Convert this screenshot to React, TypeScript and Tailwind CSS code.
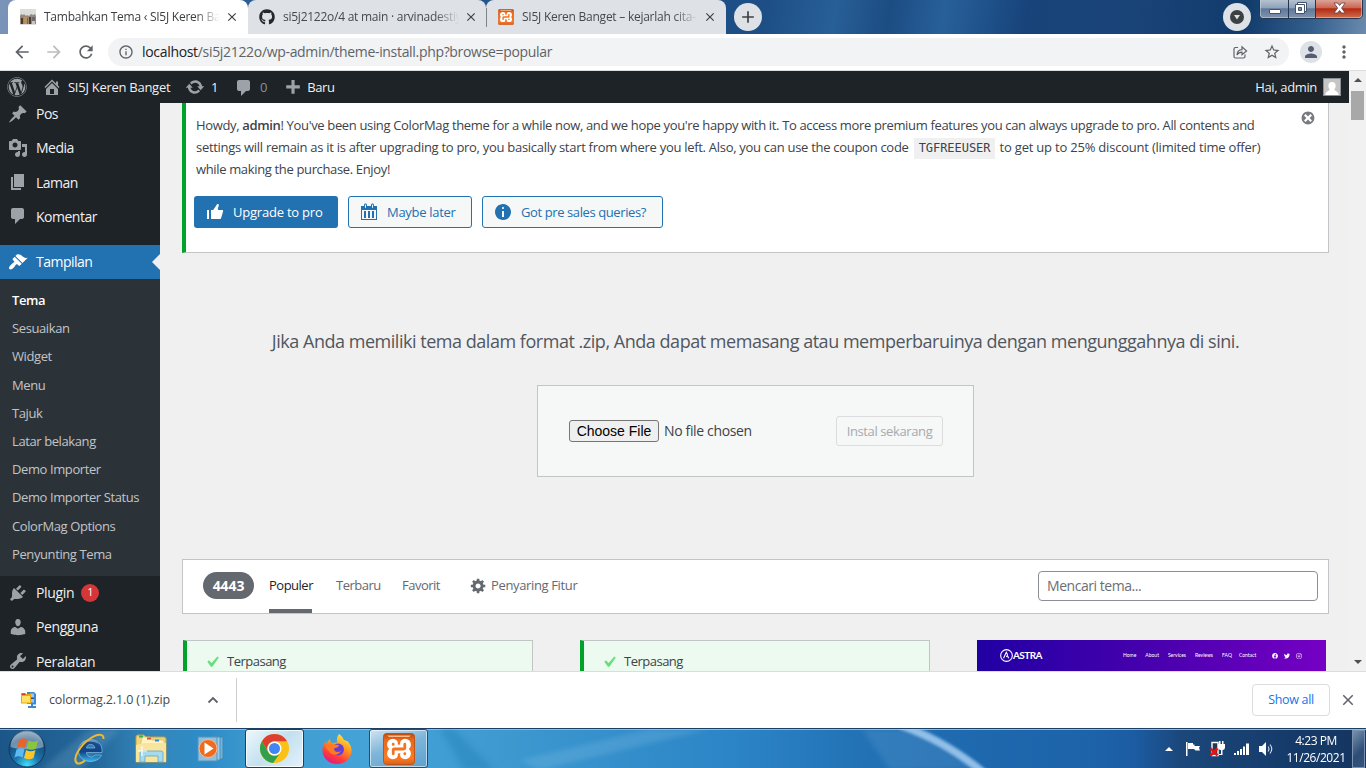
import type { ReactNode } from "react";
import { FaGithub, FaWordpress, FaFacebook, FaTwitter, FaInstagram } from "react-icons/fa";
import { MdArrowBack, MdArrowForward, MdRefresh, MdStarBorder, MdPerson, MdMoreVert, MdInfoOutline, MdClose, MdAdd } from "react-icons/md";

const dashicons = {
  post: "M10.44 3.02l1.82-1.82 6.36 6.35-1.83 1.82c-1.05-.68-2.48-.57-3.41.36l-.75.75c-.92.93-1.04 2.35-.35 3.41l-1.83 1.82-2.41-2.41-2.8 2.79c-.42.42-3.38 2.71-3.8 2.29s1.86-3.39 2.28-3.81l2.79-2.79L4.1 9.36l1.83-1.82c1.05.69 2.48.57 3.4-.36l.75-.75c.93-.92 1.05-2.35.36-3.41z",
  media: "M13 11V4c0-.55-.45-1-1-1h-1.67L9 1H5L3.67 3H2c-.55 0-1 .45-1 1v7c0 .55.45 1 1 1h10c.55 0 1-.45 1-1zM7 4.5c1.38 0 2.5 1.12 2.5 2.5S8.38 9.5 7 9.5 4.5 8.38 4.5 7 5.62 4.5 7 4.5zM14 6h5v10.5c0 1.38-1.12 2.5-2.5 2.5S14 17.88 14 16.5s1.12-2.5 2.5-2.5c.17 0 .34.02.5.05V9h-3V6zm-4 8.05V13h2v3.5c0 1.38-1.12 2.5-2.5 2.5S7 17.88 7 16.5 8.12 14 9.5 14c.17 0 .34.02.5.05z",
  page: "M6 15V2h10v13H6zm-1 1h8v2H3V5h2v11z",
  comments: "M5 2h9c1.1 0 2 .9 2 2v7c0 1.1-.9 2-2 2h-2l-5 5v-5H5c-1.1 0-2-.9-2-2V4c0-1.1.9-2 2-2z",
  appearance: "M14.48 11.06L7.41 3.99l1.5-1.5c.5-.56 2.3-.47 3.51.32 1.21.8 1.43 1.28 2.91 2.1 1.18.64 2.45 1.26 4.45.85zm-.71.71L6.7 4.7 4.93 6.47c-.39.39-.39 1.02 0 1.41l1.06 1.06c.39.39.39 1.03 0 1.42-.6.6-1.43 1.11-2.21 1.69-.35.26-.7.53-1.01.84C1.43 14.23.4 16.08 1.4 17.07c.99 1 2.84-.03 4.18-1.36.31-.31.58-.66.85-1.02.57-.78 1.08-1.61 1.69-2.21.39-.39 1.02-.39 1.41 0l1.06 1.06c.39.39 1.02.39 1.41 0z",
  plugins: "M13.11 4.36L9.87 7.6 8 5.73l3.24-3.24c.35-.34 1.05-.2 1.56.32.52.51.66 1.21.31 1.55zm-8 1.77l.91-1.12 9.01 9.01-1.19.84c-.71.71-2.63 1.16-3.82 1.16H6.14L4.9 17.26c-.59.59-1.54.59-2.12 0-.59-.58-.59-1.53 0-2.12l1.24-1.24v-3.88c0-1.13.4-3.19 1.09-3.89zm7.26 3.97l3.24-3.24c.34-.35 1.04-.21 1.55.31.52.51.66 1.21.31 1.55l-3.24 3.25z",
  users: "M10 9.25c-2.27 0-2.73-3.44-2.73-3.44C7 4.02 7.82 2 9.97 2c2.16 0 2.98 2.02 2.71 3.81 0 0-.41 3.44-2.68 3.44zm0 2.57L12.72 10c2.39 0 4.52 2.33 4.52 4.53v2.49s-3.65 1.13-7.24 1.13c-3.65 0-7.24-1.13-7.24-1.13v-2.49c0-2.25 1.94-4.48 4.47-4.48z",
  tools: "M16.68 9.77c-1.34 1.34-3.3 1.67-4.95.99l-5.41 6.52c-.99.99-2.59.99-3.58 0s-.99-2.59 0-3.57l6.52-5.42c-.68-1.65-.35-3.61.99-4.95 1.28-1.28 3.12-1.62 4.72-1.06l-2.89 2.89 2.82 2.82 2.86-2.87c.53 1.58.18 3.39-1.08 4.65zM3.81 16.21c.4.39 1.04.39 1.43 0 .4-.4.4-1.04 0-1.43-.39-.4-1.03-.4-1.43 0-.39.39-.39 1.03 0 1.43z",
  home: "M16 8.5l1.53 1.53-1.06 1.06L10 4.6l-6.47 6.49-1.06-1.06L10 2.5l4 4v-2h2v4zm-6-2.46l6 5.99V18H4v-5.97zM12 17v-5H8v5h4z",
  update: "M10.2 3.28c3.53 0 6.43 2.61 6.92 6h2.08l-3.5 4-3.5-4h2.32c-.45-1.97-2.21-3.45-4.32-3.45-1.45 0-2.73.71-3.54 1.78L4.95 5.66C6.23 4.2 8.11 3.28 10.2 3.28zm-.4 13.44c-3.52 0-6.43-2.61-6.92-6H.8l3.5-4c1.17 1.33 2.33 2.67 3.5 4H5.48c.45 1.97 2.21 3.45 4.32 3.45 1.45 0 2.73-.71 3.54-1.78l1.71 1.95c-1.28 1.46-3.15 2.38-5.25 2.38z",
  plus: "M17 7v3h-5v5H9v-5H4V7h5V2h3v5h5z",
  dismiss: "M10 2c4.42 0 8 3.58 8 8s-3.58 8-8 8-8-3.58-8-8 3.58-8 8-8zm5 11l-3-3 3-3-2-2-3 3-3-3-2 2 3 3-3 3 2 2 3-3 3 3z",
  thumbsUp: "M12.72 2c.15-.02.26.02.41.07.56.19.83.79.66 1.35-.17.55-1 3.04-1 3.58 0 .53.75 1 1.35 1h3c.6 0 1 .4 1 1s-2 7-2 7c-.17.39-.55 1-1 1H6V8h2.14c.41-.41 3.3-4.71 3.58-5.27.21-.41.6-.68 1-.73zM2 8h2v9H2V8z",
  calendar: "M15 4h3v14H2V4h3V3c0-.83.67-1.5 1.5-1.5S8 2.17 8 3v1h4V3c0-.83.67-1.5 1.5-1.5S15 2.17 15 3v1zM6 3v2.5c0 .28.22.5.5.5s.5-.22.5-.5V3c0-.28-.22-.5-.5-.5S6 2.72 6 3zm7 0v2.5c0 .28.22.5.5.5s.5-.22.5-.5V3c0-.28-.22-.5-.5-.5s-.5.22-.5.5zm4 14V8H3v9h14zM7 16V9H5v7h2zm4 0V9H9v7h2zm4 0V9h-2v7h2z",
  info: "M10 2c4.42 0 8 3.58 8 8s-3.58 8-8 8-8-3.58-8-8 3.58-8 8-8zm1 4c0-.55-.45-1-1-1s-1 .45-1 1 .45 1 1 1 1-.45 1-1zm0 9V9H9v6h2z",
  generic: "M18 12h-2.18c-.17.7-.44 1.35-.81 1.93l1.54 1.54-2.1 2.1-1.54-1.54c-.58.36-1.23.63-1.91.79V19H8v-2.18c-.68-.16-1.33-.43-1.91-.79l-1.54 1.54-2.12-2.12 1.54-1.54c-.36-.58-.63-1.23-.79-1.91H1V9.03h2.17c.16-.7.44-1.35.8-1.94L2.43 5.55l2.1-2.1 1.54 1.54c.58-.37 1.24-.64 1.93-.81V2h3v2.18c.68.16 1.33.43 1.91.79l1.54-1.54 2.12 2.12-1.54 1.54c.36.59.64 1.24.8 1.94H18V12zm-8.5 1.5c1.66 0 3-1.34 3-3s-1.34-3-3-3-3 1.34-3 3 1.34 3 3 3z",
  yes: "M14.83 4.89l1.34.94-5.81 8.38H9.02L5.78 9.67l1.34-1.25 2.57 2.4z",
};

function Dash({ name, className = "size-5" }: { name: keyof typeof dashicons; className?: string }) {
  return (
    <svg viewBox="0 0 20 20" fill="currentColor" className={`shrink-0 ${className}`}>
      <path d={dashicons[name]} />
    </svg>
  );
}

function XamppLogo({ className }: { className: string }) {
  return (
    <svg viewBox="0 0 32 32" className={className}>
      <defs>
        <linearGradient id="xo" x1="0" y1="0" x2="0" y2="1">
          <stop offset="0" stopColor="#b84a12" />
          <stop offset=".2" stopColor="#e8691a" />
          <stop offset=".8" stopColor="#fb7a24" />
          <stop offset="1" stopColor="#d85f17" />
        </linearGradient>
      </defs>
      <rect x=".5" y=".5" width="31" height="31" rx="3" fill="url(#xo)" stroke="#bf5418" />
      <path d="M4 2.500h24l-2 1.500H6z" fill="#ffb98a" />
      <g fill="#fff">
        <circle cx="9.800" cy="11.500" r="5.700" />
        <circle cx="22.200" cy="11.500" r="5.700" />
        <circle cx="9.800" cy="20.500" r="5.700" />
        <circle cx="22.200" cy="20.500" r="5.700" />
        <path d="M9 11.500h14v9H9z" />
      </g>
      <g fill="none" stroke="#f5731f" strokeWidth="2.800" strokeLinecap="round" strokeLinejoin="round">
        <path d="M10.200 20.800V17q0-1 1-1h9.600q1 0 1-1v-3.800M10.200 11.200v.2M21.800 20.600v.2" />
      </g>
      <path d="M14.800 6h2.400v5.500h-2.400zM14.800 20.500h2.400V26h-2.400z" fill="#f5731f" />
    </svg>
  );
}

function PhotoFavicon() {
  return (
    <svg viewBox="0 0 16 16" className="size-4 shrink-0">
      <rect width="16" height="16" fill="#dcdcda" />
      <path d="M0 7l1-2 2 1 1-1 2 2 1-1 2 1 2-2 2 1 2-1 1 2v8H0z" fill="#96897c" />
      <path d="M1 9h2v6H1zM9 8h2v7H9z" fill="#4b3b2e" />
      <path d="M4 8h3v7H4z" fill="#b98f5c" />
      <path d="M7 9h1v6H7zM12 8h3v4h-3z" fill="#6c6a70" />
      <path d="M12 12h3v3h-3z" fill="#c9c4c2" />
    </svg>
  );
}

type TabProps = { icon: ReactNode; title: string; active?: boolean; className: string };

function Tab({ icon, title, active, className }: TabProps) {
  return (
    <div className={`flex h-[34px] items-center rounded-t-lg ${active ? "bg-white" : "bg-[#dee1e6]"} ${className}`}>
      {icon}
      <span
        className={`ml-2 w-[176px] whitespace-nowrap text-[12px] tracking-[-0.25px] [mask-image:linear-gradient(to_right,black_86%,transparent)] ${active ? "text-[#3c4043]" : "text-[#45494d]"}`}
      >
        {title}
      </span>
      <MdClose className="ml-[5px] size-[14px] shrink-0 text-[#3c4043]" />
    </div>
  );
}

function WindowButtons() {
  return (
    <svg viewBox="0 0 106 20" className="absolute top-0 left-[1259px] h-5 w-[106px]">
      <defs>
        <linearGradient id="wb" x1="0" y1="0" x2="0" y2="1">
          <stop offset="0" stopColor="#b4c1d1" />
          <stop offset=".45" stopColor="#8fa2b9" />
          <stop offset=".5" stopColor="#5f7898" />
          <stop offset="1" stopColor="#7b93ae" />
        </linearGradient>
        <linearGradient id="wr" x1="0" y1="0" x2="0" y2="1">
          <stop offset="0" stopColor="#dba398" />
          <stop offset=".45" stopColor="#cc6550" />
          <stop offset=".5" stopColor="#b32a11" />
          <stop offset="1" stopColor="#cd6b4b" />
        </linearGradient>
      </defs>
      <path d="M.5 0v14q0 4.500 4.500 4.500h94q4.500 0 4.500-4.500V0z" fill="#d5dde6" />
      <path d="M1.500 0v13.500q0 4 4 4H29V0z" fill="url(#wb)" />
      <path d="M30 0h26v17.500H30z" fill="url(#wb)" />
      <path d="M57 0h45.500v13.500q0 4-4 4H57z" fill="url(#wr)" />
      <path d="M.5 0v14q0 4.500 4.500 4.500h94q4.500 0 4.500-4.500V0M29.500 0v18M56.500 0v18" fill="none" stroke="#26364c" />
      <rect x="10.500" y="9.500" width="11" height="4" rx=".5" fill="#fff" stroke="#44546b" />
      <path d="M38.500 2.500h9v9h-9z" fill="#fff" stroke="#44546b" />
      <path d="M36.500 4.500h9v9h-9z" fill="#fff" stroke="#44546b" />
      <path d="M39.500 7.500h3v3h-3z" fill="#7a8da5" stroke="#44546b" />
      <path d="M75 3h3.600l2 2.500 2-2.500h3.600l-3.600 5 3.600 5h-3.600l-2-2.500-2 2.500H75l3.600-5z" fill="#fff" stroke="#5a3a40" strokeWidth=".8" />
    </svg>
  );
}

function BrowserTop() {
  return (
    <header className="shrink-0">
      <div className="relative flex h-[34px] bg-[linear-gradient(100deg,#7b95ba_0%,#7089b0_3%,#2b6095_12%,#1d4f86_52%,#1d4f86_56%,#285f97_61%,#1c4c82_65%,#28609a_69%,#17437a_75%,#1a4478_83%,#113b6b_91%,#335f8d_96%,#6c8bad_100%)]">
        <Tab active className="ml-2 w-60 pl-3" title="Tambahkan Tema ‹ SI5J Keren Ban" icon={<PhotoFavicon />} />
        <Tab className="w-[238px] pl-[11px]" title="si5j2122o/4 at main · arvinadestiy" icon={<FaGithub className="size-4 shrink-0 text-[#24292f]" />} />
        <Tab className="w-[240px] pl-3" title="SI5J Keren Banget – kejarlah cita-" icon={<XamppLogo className="size-4 shrink-0" />} />
        <span className="absolute top-2 left-[486px] h-[19px] w-px bg-[#808388]" />
        <span className="mt-[3px] ml-2 flex size-7 items-center justify-center rounded-full bg-[#dee1e6]">
          <MdAdd className="size-5 text-[#3c4043]" />
        </span>
        <span className="mt-[3px] ml-[461px] flex size-7 items-center justify-center rounded-full bg-[#dee1e6]">
          <svg viewBox="0 0 14 14" className="size-[14px]">
            <circle cx="7" cy="7" r="7" fill="#3c4043" />
            <path d="M4 5h6L7 9.500z" fill="#dee1e6" />
          </svg>
        </span>
        <WindowButtons />
      </div>
      <div className="flex h-[37px] items-center border-b border-[#dadce0] bg-white text-[#5f6368]">
        <MdArrowBack className="ml-3 size-5" />
        <MdArrowForward className="ml-3 size-5 text-[#bbbdc0]" />
        <MdRefresh className="ml-3 size-5" />
        <div className="ml-3 flex h-7 w-[1181px] items-center rounded-full bg-[#f1f3f4]">
          <MdInfoOutline className="ml-[10px] size-4" />
          <span className="-mt-[2px] ml-2 text-[14px] tracking-[-0.32px] text-[#5f6368]">
            <span className="text-[#202124]">localhost</span>/si5j2122o/wp-admin/theme-install.php?browse=popular
          </span>
          <svg viewBox="0 0 16 16" fill="none" stroke="currentColor" strokeWidth="1.200" className="ml-auto size-4">
            <path d="M6 3.500H3.500q-1.500 0-1.500 1.500v7.500q0 1.500 1.500 1.500h8q1.500 0 1.500-1.500V10.500M5 11c.2-3.800 2-5.300 5-5.400V2.800L14.600 7 10 10.800V8.200C7.500 8.200 6.200 9 5 11z" />
          </svg>
          <MdStarBorder className="mr-2 ml-[15px] size-[18px]" />
        </div>
        <span className="ml-[11px] flex size-[22px] items-center justify-center rounded-full bg-[#dee1e6]">
          <MdPerson className="size-[18px] text-[#545d72]" />
        </span>
        <MdMoreVert className="ml-3 size-5" />
      </div>
    </header>
  );
}

function AdminBar() {
  return (
    <div className="flex h-8 shrink-0 items-center bg-[#1d2327] text-[13px] tracking-[-0.35px] text-[#f0f0f1]">
      <FaWordpress className="ml-[7px] size-5 text-[#9ca2a7]" />
      <Dash name="home" className="ml-[15px] size-5 text-[#9ca2a7]" />
      <span className="ml-[6px] w-[102px] pt-px tracking-[-0.27px] whitespace-nowrap">SI5J Keren Banget</span>
      <Dash name="update" className="ml-[15px] size-5 text-[#9ca2a7]" />
      <span className="ml-[6px] pt-px">1</span>
      <Dash name="comments" className="mt-[2px] ml-[16px] size-5 text-[#9ca2a7]" />
      <span className="ml-[6px] pt-px text-[#8b9095]">0</span>
      <Dash name="plus" className="mt-[3px] ml-[15px] size-[21px] text-[#9ca2a7]" />
      <span className="ml-1 pt-px">Baru</span>
      <span className="ml-auto pt-px">Hai, admin</span>
      <svg viewBox="0 0 18 18" className="mr-2 ml-[6px] size-[18px]">
        <rect width="18" height="18" fill="#8c8f94" />
        <rect x="1" y="1" width="16" height="16" fill="#c5c5c5" />
        <path d="M9 4a3.800 3.800 0 0 1 3.600 4c0 1.500-.6 2.700-1.400 3.400.3 1.300 3.800 1.700 4.300 4.600V17H2.500v-1c.5-2.900 4-3.300 4.300-4.600C6 10.700 5.400 9.500 5.400 8A3.800 3.800 0 0 1 9 4z" fill="#fff" />
      </svg>
    </div>
  );
}

const submenu = ["Sesuaikan", "Widget", "Menu", "Tajuk", "Latar belakang", "Demo Importer", "Demo Importer Status", "ColorMag Options", "Penyunting Tema"];

function MenuItem({ icon, label, children }: { icon: keyof typeof dashicons; label: string; children?: ReactNode }) {
  return (
    <li className="flex h-[34.2px] shrink-0 items-center pl-2">
      <Dash name={icon} className="size-5 text-[#9ca2a7]" />
      <span className="ml-2">{label}</span>
      {children}
    </li>
  );
}

function Sidebar() {
  return (
    <nav className="flex w-40 shrink-0 flex-col overflow-hidden bg-[#1d2327] text-[14px] tracking-[-0.5px] text-[#f0f0f1]">
      <ul className="-mt-[6.4px]">
        <MenuItem icon="post" label="Pos" />
        <MenuItem icon="media" label="Media" />
        <MenuItem icon="page" label="Laman" />
        <MenuItem icon="comments" label="Komentar" />
      </ul>
      <div className="relative mt-[11.6px] flex h-[34px] shrink-0 items-center bg-[#2271b1] pl-2 text-white">
        <Dash name="appearance" />
        <span className="ml-2">Tampilan</span>
        <span className="absolute top-[9px] right-0 border-y-8 border-r-8 border-y-transparent border-r-[#f0f0f1]" />
      </div>
      <ul className="h-[297px] shrink-0 bg-[#2c3338] pt-[7px] pl-3 text-[13px] leading-[28.2px] tracking-[-0.4px] text-[#c3c4c7]">
        <li className="font-semibold text-white">Tema</li>
        {submenu.map((s) => (
          <li key={s}>{s}</li>
        ))}
      </ul>
      <ul className="-mt-[0.4px] tracking-[-0.35px]">
        <MenuItem icon="plugins" label="Plugin">
          <span className="ml-[7px] flex size-[18px] items-center justify-center rounded-full bg-[#d63638] text-[11px] text-white">1</span>
        </MenuItem>
        <MenuItem icon="users" label="Pengguna" />
        <MenuItem icon="tools" label="Peralatan" />
      </ul>
    </nav>
  );
}

function Notice() {
  return (
    <section className="relative h-[150px] shrink-0 border-r border-b border-l-4 border-r-[#c3c4c7] border-b-[#c3c4c7] border-l-[#00a32a] bg-white pt-[11px] pl-2 text-[13px] text-[#3c434a]">
      <div className="pl-[2px] leading-[22px] whitespace-nowrap">
        <p className="h-[22px] tracking-[-0.345px]">
          Howdy, <b className="font-semibold">admin</b>! You've been using ColorMag theme for a while now, and we hope you're happy with it. To access more premium features you can always upgrade to pro. All contents and
        </p>
        <p className="h-[22px] tracking-[-0.29px]">
          settings will remain as it is after upgrading to pro, you basically start from where you left. Also, you can use the coupon code{" "}
          <code className="mr-px ml-[2px] bg-[#f0f0f1] px-[5px] pt-[3px] pb-[4px] font-['DejaVu_Sans_Mono',monospace] text-[12px] tracking-[-0.05px]">TGFREEUSER</code>
          <span className="tracking-[-0.21px]"> to get up to 25% discount (limited time offer)</span>
        </p>
        <p className="h-[22px] tracking-[-0.35px]">while making the purchase. Enjoy!</p>
      </div>
      <div className="mt-4 flex gap-[10px] tracking-[-0.3px] text-[#2271b1]">
        <span className="flex h-8 w-36 items-center rounded-[3px] bg-[#2271b1] pl-[11px] text-white">
          <Dash name="thumbsUp" />
          <span className="ml-2 pt-[2px] tracking-[-0.22px]">Upgrade to pro</span>
        </span>
        <span className="flex h-8 w-[124px] items-center rounded-[3px] border border-[#2271b1] bg-[#f6f7f7] pl-[10px]">
          <Dash name="calendar" />
          <span className="ml-2 pt-[2px]">Maybe later</span>
        </span>
        <span className="flex h-8 w-[181px] items-center rounded-[3px] border border-[#2271b1] bg-[#f6f7f7] pl-[10px]">
          <Dash name="info" />
          <span className="ml-2 pt-[2px] tracking-[-0.4px]">Got pre sales queries?</span>
        </span>
      </div>
      <Dash name="dismiss" className="absolute top-[7px] right-3 size-4 text-[#787c82]" />
    </section>
  );
}

function InstalledCard() {
  return (
    <article className="flex w-[350px] border border-l-4 border-[#c3c4c7] border-l-[#00a32a] bg-[#edfaef] pt-[10px] pl-[14px] text-[13px] tracking-[-0.5px] text-[#3c434a]">
      <Dash name="yes" className="size-[22px] text-[#68de7c]" />
      <span className="ml-1 leading-5">Terpasang</span>
    </article>
  );
}

function AstraCard() {
  return (
    <article className="flex w-[349px] items-center bg-[linear-gradient(90deg,#2100a3,#4c00b0_55%,#7600c4)] pl-[23px] font-['Lato',sans-serif] text-[5px] text-white">
      <svg viewBox="0 0 12 12" className="size-[13px]" fill="none" stroke="#fff">
        <circle cx="6" cy="6" r="5.400" strokeWidth="1" />
        <path d="M3.300 8.500L5.800 3l1.200 2.400M5.800 7.200l1-1.200 1.200 2.500" strokeWidth="1" />
      </svg>
      <span className="w-[29px] text-[10px] font-bold tracking-[-0.6px]">ASTRA</span>
      <span className="ml-[81px] flex gap-[9px]">
        <span>Home</span>
        <span>About</span>
        <span>Services</span>
        <span>Reviews</span>
        <span>FAQ</span>
        <span className="-ml-[2px]">Contact</span>
      </span>
      <span className="ml-4 flex gap-[6px]">
        <FaFacebook className="size-[6px]" />
        <FaTwitter className="size-[6px]" />
        <FaInstagram className="size-[6px]" />
      </span>
    </article>
  );
}

function Content() {
  return (
    <main className="flex min-w-0 flex-1 flex-col bg-[#f0f0f1] pr-5 pl-[22px]">
      <Notice />
      <p className="mt-[75px] text-center text-[18px] leading-[26px] tracking-[-0.47px] whitespace-nowrap text-[#50575e]">
        Jika Anda memiliki tema dalam format .zip, Anda dapat memasang atau memperbaruinya dengan mengunggahnya di sini.
      </p>
      <form className="mx-auto mt-[31px] flex h-[92px] w-[437px] shrink-0 items-center border border-[#c3c4c7] bg-[#f6f7f7] pl-[31px]">
        <span className="flex h-[22px] w-[90px] items-center justify-center rounded-[3px] border border-[#767676] bg-[#efefef] font-['Liberation_Sans',sans-serif] text-[14px] text-black">Choose File</span>
        <span className="-mt-px ml-[5px] w-[172px] text-[14px] tracking-[-0.35px] text-[#3c434a]">No file chosen</span>
        <span className="flex h-[30px] w-[107px] items-center justify-center rounded-[3px] border border-[#dcdcde] pt-[2px] text-[13px] tracking-[-0.38px] text-[#a7aaad]">Instal sekarang</span>
      </form>
      <div className="mt-[82px] flex h-[55px] shrink-0 items-center border border-[#c3c4c7] bg-white pl-5 text-[13px] tracking-[-0.5px] text-[#646970]">
        <span className="-mt-[2px] flex h-[27px] w-[51px] items-center justify-center rounded-full bg-[#646970] text-[14px] font-bold tracking-[-0.1px] text-white">4443</span>
        <span className="ml-[15px] flex h-full w-[43px] items-center border-b-4 border-[#646970] pt-[2px] text-[#1d2327]">Populer</span>
        <span className="-mt-[2px] ml-6 w-[43px]">Terbaru</span>
        <span className="-mt-[2px] ml-[23px] w-[38px]">Favorit</span>
        <Dash name="generic" className="-mt-[2px] ml-[30px] size-[17px]" />
        <span className="-mt-[2px] ml-1 tracking-[-0.36px] whitespace-nowrap">Penyaring Fitur</span>
        <span className="-mt-[2px] mr-[10px] ml-auto flex h-[30px] w-[280px] items-center rounded border border-[#8c8f94] pl-2 text-[14px] tracking-[-0.45px] text-[#6b6f74]">Mencari tema...</span>
      </div>
      <div className="mt-[26px] flex min-h-0 flex-1 gap-[47px] overflow-hidden pl-px">
        <div className="flex h-40">
          <InstalledCard />
        </div>
        <div className="flex h-40">
          <InstalledCard />
        </div>
        <div className="flex h-[31px]">
          <AstraCard />
        </div>
      </div>
    </main>
  );
}

function Scrollbar() {
  return (
    <div className="flex w-[17px] shrink-0 flex-col items-center bg-[#f1f1f1]">
      <span className="mt-[7px] border-x-4 border-b-4 border-x-transparent border-b-[#505050]" />
      <span className="mt-[9px] h-[29px] w-[13px] bg-[#a8a8a8]" />
      <span className="mt-auto mb-[7px] border-x-4 border-t-4 border-x-transparent border-t-[#505050]" />
    </div>
  );
}

function DownloadBar() {
  return (
    <div className="flex h-[57px] shrink-0 items-center border-t border-[#dadce0] bg-white text-[12.5px] tracking-[-0.12px] text-[#45494d]">
      <svg viewBox="0 0 16 16" className="ml-[21px] size-4">
        <path d="M6 0h7l2 2v10.500h-3V14h3v2H7v-2h3v-2H6z" fill="#3f86cf" />
        <path d="M9 1.500h4v9H9z" fill="#9cc5ee" />
        <path d="M0 1h4l1 1h5v9.500H0z" fill="#e8a90a" />
        <path d="M1 4h8v6.500H1z" fill="#ffe169" />
        <path d="M1 1.500h3.500v1.500H1z" fill="#d23a20" />
        <path d="M10 5.500h3v1.500h-3z" fill="#2b4f8a" />
      </svg>
      <span className="ml-3 w-[158px] pt-px">colormag.2.1.0 (1).zip</span>
      <svg viewBox="0 0 12 8" className="w-3 text-[#5f6368]" fill="none" stroke="currentColor" strokeWidth="1.800">
        <path d="M1.500 6.500L6 2l4.500 4.500" />
      </svg>
      <span className="ml-[17px] h-11 w-px bg-[#cfcfcf]" />
      <span className="ml-auto flex h-8 w-[78px] items-center justify-center rounded border border-[#dadce0] font-medium tracking-[-0.33px] text-[#1a73e8]">Show all</span>
      <MdClose className="mr-[9px] ml-[9px] size-[18px] text-[#5f6368]" />
    </div>
  );
}

function StartOrb() {
  return (
    <svg viewBox="0 0 38 38" className="size-[38px]">
      <defs>
        <radialGradient id="orb" cx=".5" cy=".95" r=".95">
          <stop offset="0" stopColor="#3fe0fb" />
          <stop offset=".35" stopColor="#1c78b0" />
          <stop offset=".75" stopColor="#164a78" />
          <stop offset="1" stopColor="#6c8ba8" />
        </radialGradient>
      </defs>
      <circle cx="19" cy="19" r="18" fill="url(#orb)" stroke="#123a5d" />
      <path d="M2.500 17a16.500 16.500 0 0 1 33 0c-8 3-25 3-33 0z" fill="#fff" opacity=".38" />
      <path d="M11 10c3-2 5-1.800 8 0l-2 8c-3-1.700-5-1.700-8 0z" fill="#e9632a" />
      <path d="M20.500 10.500c3 1.700 6 1.800 9.500 0l-2 8c-3 1.700-6 1.700-9.500 0z" fill="#8bc53f" />
      <path d="M8.500 19.500c3-1.700 5-1.700 8 0l-2 8c-3-1.700-5-1.700-8 0z" fill="#5db9f0" />
      <path d="M18 20c3 1.700 6 1.700 9.500 0l-2 8c-3 1.700-6 1.700-9.500 0z" fill="#fcc52a" />
    </svg>
  );
}

function InternetExplorer() {
  return (
    <svg viewBox="0 0 32 32" className="size-8">
      <defs>
        <linearGradient id="ie" x1="0" y1="0" x2="0" y2="1">
          <stop offset="0" stopColor="#1a4f96" />
          <stop offset=".55" stopColor="#124585" />
          <stop offset="1" stopColor="#35b6ee" />
        </linearGradient>
      </defs>
      <path d="M29 19.500H13.500c.3 5 6.500 5.800 8.500 2.500h6.500C25 31.500 5.500 31 5.500 17.500 5.500 3.500 30.500 2 29 19.500zM13.500 15h8.300c-.6-4.800-7.700-4.800-8.300 0z" fill="url(#ie)" stroke="#8fd0f2" strokeWidth=".6" />
      <path d="M7 13c3-8 16-8.500 19.500-1C21 7 12 8 7 13z" fill="#fff" opacity=".35" />
      <path d="M4.500 30.500C-2 27 7 12 18 5 25 .5 31 .5 30.500 6" fill="none" stroke="#f2b92c" strokeWidth="2" />
      <path d="M4 30.200c2 1.200 6-.8 8-2.700" fill="none" stroke="#f2b92c" strokeWidth="2" />
    </svg>
  );
}

function Explorer() {
  return (
    <svg viewBox="0 0 34 30" className="h-[30px] w-[34px]">
      <path d="M2 3q0-2 2-2h6l2 2h18q2 0 2 2v23H2z" fill="#efd47c" stroke="#c59f3c" />
      <path d="M8 3h8l2 3h12v8H6z" fill="#fff3c2" stroke="#d2b35c" strokeWidth=".6" />
      <path d="M5 1.500h4v2H5z" fill="#32b254" />
      <path d="M13 3.500h4v2h-4z" fill="#dd4b2c" />
      <path d="M21 5.500h4v2h-4z" fill="#2b8fdc" />
      <path d="M2 11l8-2h22v19H2z" fill="#f8e49c" />
      <path d="M6 28v-9q0-2 2-2h19q2 0 2 2v9h-5v-6H11v6z" fill="#a6dbee" stroke="#5ba7c6" strokeWidth=".8" />
      <path d="M8 12v10M4 17h9" stroke="#fff" strokeWidth="1.200" />
    </svg>
  );
}

function MediaPlayer() {
  return (
    <svg viewBox="0 0 30 26" className="h-[26px] w-[30px]">
      <path d="M20 1h6v22h-6z" fill="#6fb3dc" stroke="#3f86b5" />
      <path d="M16 1h7v23h-7z" fill="#9bcdeb" stroke="#4d90bb" />
      <rect x="1" y="1" width="19" height="24" fill="#8fbfdc" stroke="#5694ba" />
      <circle cx="11" cy="12.500" r="9" fill="#ef6a1d" stroke="#fbb98a" strokeWidth="1" />
      <path d="M7.500 6.500l9 6-9 6z" fill="#fff" />
    </svg>
  );
}

function Chrome() {
  return (
    <svg viewBox="0 0 32 32" className="size-[31px]">
      <circle cx="16" cy="16" r="15" fill="#fbc116" />
      <path d="M3 8.500A15 15 0 0 1 29 8.500H16a7.500 7.500 0 0 0-6.500 11z" fill="#dd4033" />
      <path d="M3 8.500a15 15 0 0 0 11.500 22.400L22.500 19.800a7.500 7.500 0 0 1-13 0z" fill="#2da14c" />
      <circle cx="16" cy="16" r="7.300" fill="#fff" />
      <circle cx="16" cy="16" r="5.700" fill="#4285f4" />
    </svg>
  );
}

function Firefox() {
  return (
    <svg viewBox="0 0 32 32" className="size-8">
      <defs>
        <linearGradient id="ff" x1=".8" y1="0" x2=".3" y2="1">
          <stop offset="0" stopColor="#fff14a" />
          <stop offset=".4" stopColor="#ff9a1e" />
          <stop offset=".75" stopColor="#ff3a3d" />
          <stop offset="1" stopColor="#e31587" />
        </linearGradient>
      </defs>
      <path d="M18 1c2.500 1.500 4 4 5 6 2 .5 2 1 3.500 1 3 3.500 4.500 7 4 11-1 7-7 12-14.500 12C8 31 1.500 25 1.500 17c0-4 1.500-7 3-9l.7 3C6 9 7.500 7 9 6c0 2 .5 3 2 4l5-.5c-.5-3 0-6 2-8.500z" fill="url(#ff)" />
      <circle cx="17" cy="16.500" r="6" fill="#6a3fd0" />
      <path d="M5 11c3-1.500 6-.5 8 .5l5 .5c0 2-2 2.500-5 3.500 0 3 3 4.500 7 2.500-2 4-8 5-11 1.500S4 14 5 11z" fill="#ff7a20" />
    </svg>
  );
}

function Taskbar() {
  return (
    <footer className="relative flex h-10 shrink-0 items-center overflow-hidden border-t border-[#1c3f66] bg-[linear-gradient(90deg,#1c5688_0%,#24689c_7%,#3587ba_11%,#2d8cc8_15%,#3f9ccf_19%,#45a3d8_27%,#3f9bd1_35%,#358fcb_45%,#2b84c6_54%,#2272b5_63%,#1e68ae_72%,#1d63aa_80%,#1c5ca3_83%,#1b477a_86.500%,#153a69_95%,#16355f_100%)] text-white shadow-[inset_0_1px_0_#8ebbdd]">
      <svg viewBox="0 0 1366 40" preserveAspectRatio="none" className="absolute inset-0 size-full">
        <defs>
          <filter id="soft" x="-20%" y="-50%" width="140%" height="200%">
            <feGaussianBlur stdDeviation="3" />
          </filter>
          <filter id="glow" x="-20%" y="-50%" width="140%" height="200%">
            <feGaussianBlur stdDeviation="1.500" />
          </filter>
        </defs>
        <g filter="url(#soft)" fill="#b9e2fa">
          <path d="M862 0h50l70 42h-92z" opacity=".12" />
          <path d="M90 0h30L80 42H40z" opacity=".15" />
          <path d="M520 32L650 0h60L540 42z" opacity=".15" />
          <path d="M440 0h14l40 42h-30z" fill="#0e5d96" opacity=".2" />
        </g>
        <path d="M900-4Q945 12 985 46" fill="none" stroke="#a5cef2" strokeWidth="8" opacity=".85" filter="url(#glow)" />
      </svg>
      <div className="relative flex h-full items-center">
        <span className="ml-2"><StartOrb /></span>
        <span className="ml-[27px]"><InternetExplorer /></span>
        <span className="ml-[29px]"><Explorer /></span>
        <span className="ml-[29px]"><MediaPlayer /></span>
        <span className="ml-[18px] flex h-[39px] w-[59px] items-center justify-center rounded-[3px] border border-[#1f3f5c] bg-[linear-gradient(135deg,#eef7fc,#c3e0ef_50%,#e2f2fa)] shadow-[inset_0_0_0_1px_#ffffffc0]"><Chrome /></span>
        <span className="ml-[17px]"><Firefox /></span>
        <span className="ml-4 flex h-[39px] w-[59px] items-center justify-center rounded-[3px] border border-[#1f4f78] bg-[linear-gradient(160deg,#cfe4f2,#7fb5d8_45%,#5ba2cf)] shadow-[inset_0_0_0_1px_#ffffff90]"><XamppLogo className="size-8" /></span>
      </div>
      <div className="relative ml-auto flex h-full items-center">
        <span className="border-x-4 border-b-4 border-x-transparent border-b-white" />
        <svg viewBox="0 0 16 16" className="ml-3 size-4" fill="#fff">
          <path d="M1 1h1.500v14H1zM3 2h5v1.500h1.500V5H15l-1 2 1 2.500h-4.500L9 8H3z" />
        </svg>
        <svg viewBox="0 0 16 16" className="ml-2 size-4">
          <path d="M3 1.500h6v13H3z" fill="#26374f" stroke="#fff" strokeWidth="1.400" />
          <path d="M9 3h1V0h1.500v3H13V0h1.500v3H16v3q0 3-2.500 3v5H10v-1h2V9Q9 9 9 6z" fill="#fff" />
          <path d="M1.500 7.500l7 7m0-7l-7 7" stroke="#e51313" strokeWidth="2.600" />
        </svg>
        <svg viewBox="0 0 16 14" className="ml-[9px] h-[14px] w-4" fill="#fff">
          <path d="M0 11h2v2H0zM3 9h2v4H3zM6 7h2v6H6zM9 4.500h2V13H9zM12 1.500h3V13h-3z" />
        </svg>
        <svg viewBox="0 0 16 16" className="ml-2 size-4" fill="#fff">
          <path d="M1 5h3l4-4v14l-4-4H1z" />
          <path d="M10 5.500q2 2.500 0 5M12 3.500q3.500 4.500 0 9" fill="none" stroke="#d6dde6" strokeWidth="1.100" />
        </svg>
        <div className="ml-3 w-[60px] text-center text-[12px] leading-[17px] tracking-[-0.45px] whitespace-nowrap">
          <div>4:23 PM</div>
          <div>11/26/2021</div>
        </div>
        <span className="mr-px ml-[6px] h-[38px] w-[13px] border border-[#7b91ad] bg-[linear-gradient(135deg,#7890ae,#2d4d76_60%,#34547c)]" />
      </div>
    </footer>
  );
}

export default function App() {
  return (
    <div className="flex h-[768px] w-[1366px] flex-col overflow-hidden bg-white font-['Open_Sans',sans-serif]">
      <BrowserTop />
      <div className="flex min-h-0 flex-1">
        <div className="flex min-w-0 flex-1 flex-col">
          <AdminBar />
          <div className="flex min-h-0 flex-1">
            <Sidebar />
            <Content />
          </div>
        </div>
        <Scrollbar />
      </div>
      <DownloadBar />
      <Taskbar />
    </div>
  );
}
